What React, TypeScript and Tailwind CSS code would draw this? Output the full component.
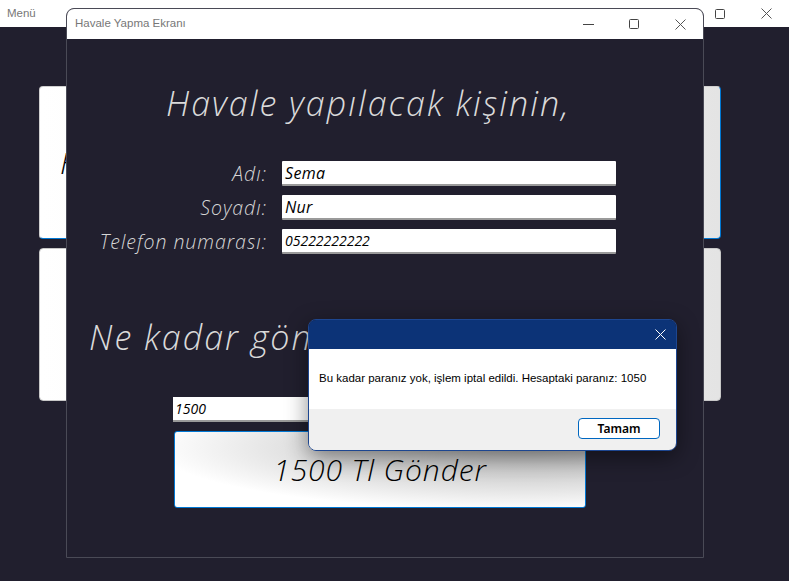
import React from 'react';

const raleway = { fontFamily: '"Open Sans", Lato, sans-serif' };

function CloseIcon({ className }: { className?: string }) {
  return (
    <svg width="11" height="11" viewBox="0 0 11 11" className={className}>
      <path d="M0.5 0.5 L10.5 10.5 M10.5 0.5 L0.5 10.5" stroke="currentColor" strokeWidth="1" fill="none" />
    </svg>
  );
}

function MaxIcon() {
  return (
    <svg width="10" height="10" viewBox="0 0 10 10">
      <rect x="0.5" y="0.5" width="9" height="9" rx="1" stroke="currentColor" strokeWidth="1" fill="none" />
    </svg>
  );
}

function MinIcon() {
  return (
    <svg width="11" height="10" viewBox="0 0 11 10">
      <path d="M0 5.5 H11" stroke="currentColor" strokeWidth="1" />
    </svg>
  );
}

function Field({ label, value, small }: { label: string; value: string; small?: boolean }) {
  return (
    <div className="flex items-center h-[25px]">
      <div className="w-[201px] text-right text-[19.5px] tracking-[0.05em] font-light text-[#d6d6d6] italic pr-[1px]" style={raleway}>
        {label}
      </div>
      <div className="ml-[14px] w-[334px] h-[25px] bg-white border-b-2 border-[#9a9a9a] rounded-[1px] flex items-center pl-[3px]">
        <span className={(small ? 'text-[14px]' : 'text-[16px] tracking-[0.02em]') + ' italic text-black'} style={raleway}>
          {value}
        </span>
      </div>
    </div>
  );
}

function MessageBox() {
  return (
    <div className="absolute left-[308px] top-[319px] w-[369px] h-[132px] rounded-[8px] border border-[#1d4690] overflow-hidden shadow-[0_6px_22px_rgba(0,0,0,0.45)] flex flex-col">
      <div className="h-[29px] bg-[#0c3377] flex items-center justify-end pr-[10px] text-white">
        <CloseIcon />
      </div>
      <div className="h-[60px] bg-white flex items-center pl-[10px] text-[11.5px] text-black" style={{ fontFamily: '"Liberation Sans", Arial, sans-serif' }}>
        Bu kadar paranız yok, işlem iptal edildi. Hesaptaki paranız: 1050
      </div>
      <div className="flex-1 bg-[#f0f0f0] flex items-start justify-end pt-[9px] pr-[16px]">
        <div className="w-[82px] h-[21px] bg-white border border-[#0067c0] rounded-[4px] flex items-center justify-center text-[12px] font-semibold text-black" style={{ fontFamily: '"Noto Sans", sans-serif' }}>
          Tamam
        </div>
      </div>
    </div>
  );
}

function HavaleWindow() {
  return (
    <div className="absolute left-[66px] top-[8px] w-[638px] h-[550px] rounded-t-[8px] border border-[#4a4a56] overflow-hidden flex flex-col bg-[#211f2e]">
      <div className="h-[30px] bg-white flex items-center text-[#777] shrink-0">
        <span className="pl-[8px] text-[11.5px]" style={{ fontFamily: '"Liberation Sans", Arial, sans-serif' }}>
          Havale Yapma Ekranı
        </span>
        <div className="ml-auto flex items-center text-[#444]">
          <div className="w-[46px] flex justify-center"><MinIcon /></div>
          <div className="w-[46px] flex justify-center"><MaxIcon /></div>
          <div className="w-[46px] flex justify-center text-[#555]"><CloseIcon /></div>
        </div>
      </div>
      <div className="flex-1 flex flex-col">
        <div className="mt-[44px] ml-[99px] h-[40px] leading-[40px] text-[34px] tracking-[0.06em] font-light italic text-[#dadada] whitespace-nowrap" style={raleway}>
          Havale yapılacak kişinin,
        </div>
        <div className="mt-[38px] flex flex-col gap-[9px]">
          <Field label="Adı:" value="Sema" />
          <Field label="Soyadı:" value="Nur" />
          <Field label="Telefon numarası:" value="05222222222" small />
        </div>
        <div className="mt-[63px] ml-[22px] h-[40px] leading-[40px] text-[34px] tracking-[0.06em] font-light italic text-[#dadada] whitespace-nowrap" style={raleway}>
          Ne kadar göndermek istiyorsunuz?
        </div>
        <div className="mt-[40px] ml-[106px] w-[412px] h-[25px] border-b-2 border-[#9a9a9a] bg-gradient-to-r from-white via-white to-[#d6d6d6] flex items-center pl-[2px]">
          <span className="text-[14px] italic text-black" style={raleway}>1500</span>
        </div>
        <div className="mt-[9px] ml-[107px] w-[412px] h-[77px] rounded-[3px] border border-[#0078d4] bg-[radial-gradient(ellipse_at_85%_20%,#b8b8b8_0%,#d4d4d4_35%,#ffffff_75%)] flex items-center justify-center">
          <span className="text-[30px] tracking-[0.03em] font-light italic text-black" style={raleway}>1500 Tl Gönder</span>
        </div>
      </div>
    </div>
  );
}

export default function App() {
  return (
    <div className="relative w-[789px] h-[581px] overflow-hidden bg-[#211f2e]">
      <div className="h-[27px] bg-white flex items-center text-[#777]">
        <span className="pl-[7px] text-[11.5px]" style={{ fontFamily: '"Liberation Sans", Arial, sans-serif' }}>
          Menü
        </span>
        <div className="ml-auto flex items-center text-[#444]">
          <div className="w-[46px] flex justify-center"><MaxIcon /></div>
          <div className="w-[46px] flex justify-center text-[#555]"><CloseIcon /></div>
        </div>
      </div>
      <div className="pt-[59px] pl-[39px] flex flex-col gap-[9px]">
        <div className="w-[682px] h-[153px] rounded-[4px] border border-[#0078d4] border-l-[#d0d0d0] border-t-[#d0d0d0] bg-gradient-to-r from-white via-[#f6f6f6] to-[#e4e4e4] flex items-center pl-[20px]">
          <span className="text-[30px] font-light italic text-black" style={raleway}>Havale Yap</span>
        </div>
        <div className="w-[682px] h-[153px] rounded-[4px] border border-[#c8c8c8] bg-gradient-to-r from-white via-[#f6f6f6] to-[#e4e4e4]" />
      </div>
      <HavaleWindow />
      <MessageBox />
    </div>
  );
}
